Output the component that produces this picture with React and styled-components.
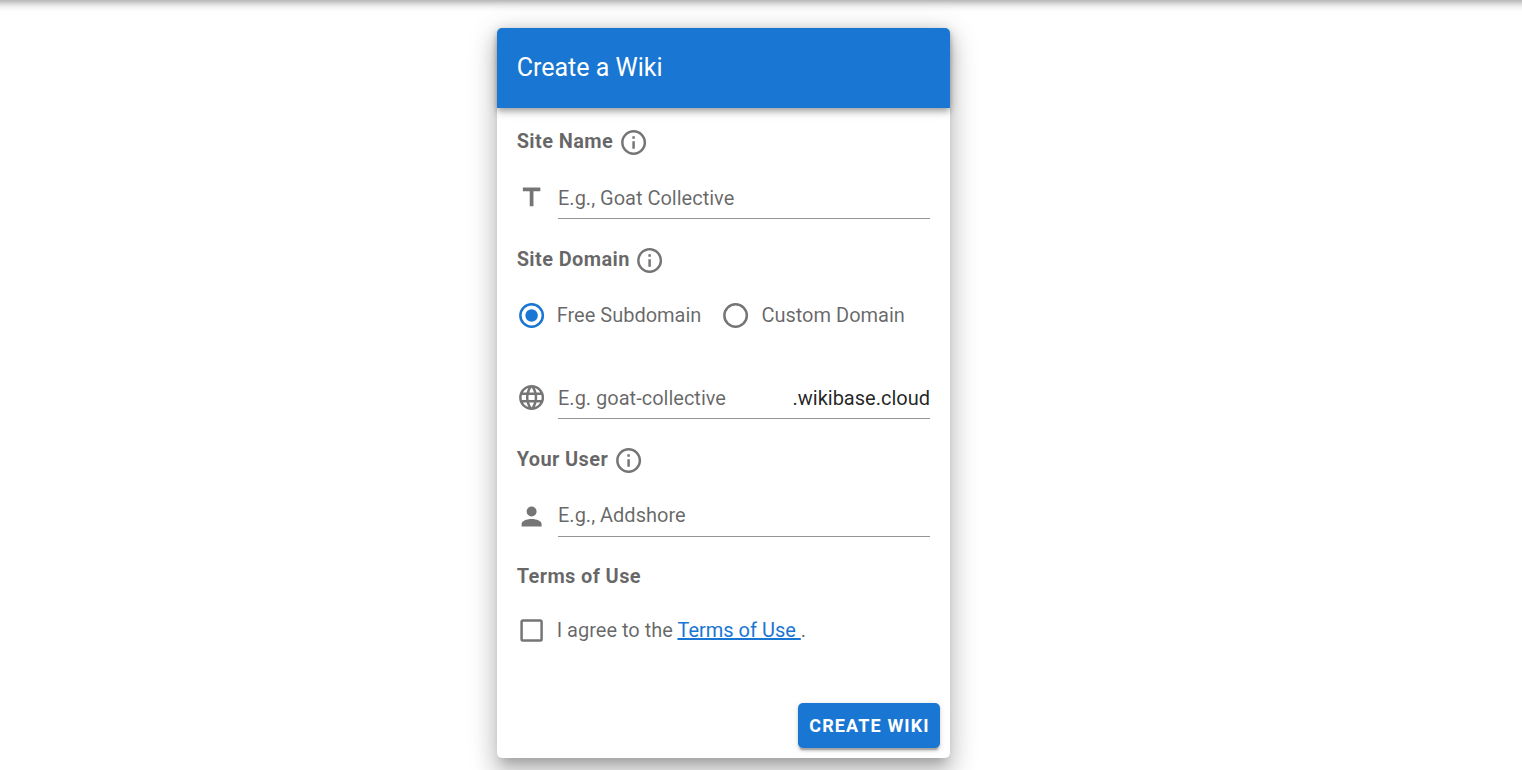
import React from "react";
import styled, { createGlobalStyle } from "styled-components";

const GlobalStyle = createGlobalStyle`
  *, *::before, *::after { box-sizing: border-box; }
  html, body { margin: 0; height: 100%; overflow: hidden; background: #fff; }
  body { font-family: Roboto, "Liberation Sans", sans-serif; font-size: 20px; color: rgba(0, 0, 0, 0.87); }
`;

const Page = styled.main`
  height: 770px;
  overflow: hidden;
  display: flex;
  flex-direction: column;
`;

const AppBarEdge = styled.div`
  flex: none;
  height: 80px;
  margin: -80px -20px 0;
  box-shadow: 0 2.5px 5px -1.25px rgba(0, 0, 0, 0.2), 0 5px 6.25px 0 rgba(0, 0, 0, 0.14),
    0 1.25px 12.5px 0 rgba(0, 0, 0, 0.12);
`;

const Card = styled.form`
  flex: none;
  width: 453px;
  height: 730px;
  margin: 28px 0 0 497px;
  display: flex;
  flex-direction: column;
  border-radius: 5px;
  background: #fff;
  box-shadow: 0 8.75px 10px -5px rgba(0, 0, 0, 0.2), 0 15px 21.25px 2.5px rgba(0, 0, 0, 0.14),
    0 6.25px 27.5px 5px rgba(0, 0, 0, 0.12);
`;

const Toolbar = styled.header`
  height: 80px;
  padding: 0 20px 0 19.7px;
  display: flex;
  align-items: center;
  border-radius: 5px 5px 0 0;
  background: #1976d2;
  color: #fff;
  font-size: 25px;
  line-height: 37.5px;
  box-shadow: 0 2.5px 5px -1.25px rgba(0, 0, 0, 0.2), 0 5px 6.25px 0 rgba(0, 0, 0, 0.14),
    0 1.25px 12.5px 0 rgba(0, 0, 0, 0.12);
`;

const Body = styled.div`
  flex: 1;
  padding: 19px 20px 0 19.7px;
  display: flex;
  flex-direction: column;
`;

const Heading = styled.h3`
  height: 30px;
  margin: ${(p) => p.$top || 0}px 0 0;
  display: flex;
  gap: 5.6px;
  color: rgba(0, 0, 0, 0.6);
  font-size: 20px;
  font-weight: 700;
  line-height: 29px;
  letter-spacing: 0.37px;
`;

const Svg = styled.svg`
  flex: none;
  width: 30px;
  height: 30px;
  margin-top: ${(p) => p.$shift || 0}px;
  transform: translate(-0.4px, -0.5px);
  fill: ${(p) => (p.$active ? "#1976d2" : "rgba(0, 0, 0, 0.54)")};
`;

const Field = styled.label`
  height: 40px;
  margin-top: ${(p) => p.$top}px;
  display: flex;
  gap: 11.3px;
`;

const InputLine = styled.span`
  flex: 1;
  min-width: 0;
  display: flex;
  align-items: center;
  padding-bottom: ${(p) => p.$lift || 2}px;
  border-bottom: 1px solid rgba(0, 0, 0, 0.42);
`;

const Input = styled.input`
  flex: 1;
  min-width: 0;
  height: 34px;
  padding: 0;
  border: 0;
  outline: 0;
  background: none;
  font: inherit;
  color: inherit;
  &::placeholder { color: rgba(0, 0, 0, 0.6); opacity: 1; }
`;

const Choices = styled.div`
  height: 30px;
  margin-top: ${(p) => p.$top}px;
  display: flex;
  gap: 20px;
`;

const Choice = styled.label`
  display: flex;
  gap: 10px;
  color: rgba(0, 0, 0, 0.6);
  line-height: 29px;
  white-space: pre;
`;

const Link = styled.a`
  color: #1976d2;
  text-decoration: underline;
`;

const Actions = styled.footer`
  padding: 10px;
  display: flex;
  justify-content: flex-end;
`;

const Button = styled.button`
  width: 142px;
  height: 45px;
  padding: 0 0 0 1px;
  border: 0;
  border-radius: 5px;
  background: #1976d2;
  color: #fff;
  font-family: inherit;
  font-size: 18px;
  font-weight: 700;
  letter-spacing: 1.15px;
  white-space: nowrap;
  box-shadow: 0 3.75px 1.25px -2.5px rgba(0, 0, 0, 0.2), 0 2.5px 2.5px 0 rgba(0, 0, 0, 0.14),
    0 1.25px 6.25px 0 rgba(0, 0, 0, 0.12);
`;

const icons = {
  info: "M11,9H13V7H11M12,20C7.59,20 4,16.41 4,12C4,7.59 7.59,4 12,4C16.41,4 20,7.59 20,12C20,16.41 16.41,20 12,20M12,2A10,10 0 0,0 2,12A10,10 0 0,0 12,22A10,10 0 0,0 22,12A10,10 0 0,0 12,2M11,17H13V11H11V17Z",
  title: "M5,4V7H10.5V19H13.5V7H19V4H5Z",
  radioOn: "M12,20A8,8 0 0,1 4,12A8,8 0 0,1 12,4A8,8 0 0,1 20,12A8,8 0 0,1 12,20M12,2A10,10 0 0,0 2,12A10,10 0 0,0 12,22A10,10 0 0,0 22,12A10,10 0 0,0 12,2M12,7A5,5 0 0,0 7,12A5,5 0 0,0 12,17A5,5 0 0,0 17,12A5,5 0 0,0 12,7Z",
  radioOff: "M12,20A8,8 0 0,1 4,12A8,8 0 0,1 12,4A8,8 0 0,1 20,12A8,8 0 0,1 12,20M12,2A10,10 0 0,0 2,12A10,10 0 0,0 12,22A10,10 0 0,0 22,12A10,10 0 0,0 12,2Z",
  web: "M16.36,14C16.44,13.34 16.5,12.68 16.5,12C16.5,11.32 16.44,10.66 16.36,10H19.74C19.9,10.64 20,11.31 20,12C20,12.69 19.9,13.36 19.74,14M14.59,19.56C15.19,18.45 15.65,17.25 15.97,16H18.92C17.96,17.65 16.43,18.93 14.59,19.56M14.34,14H9.66C9.56,13.34 9.5,12.68 9.5,12C9.5,11.32 9.56,10.65 9.66,10H14.34C14.43,10.65 14.5,11.32 14.5,12C14.5,12.68 14.43,13.34 14.34,14M12,19.96C11.17,18.76 10.5,17.43 10.09,16H13.91C13.5,17.43 12.83,18.76 12,19.96M8,8H5.08C6.03,6.34 7.57,5.06 9.4,4.44C8.8,5.55 8.35,6.75 8,8M5.08,16H8C8.35,17.25 8.8,18.45 9.4,19.56C7.57,18.93 6.03,17.65 5.08,16M4.26,14C4.1,13.36 4,12.69 4,12C4,11.31 4.1,10.64 4.26,10H7.64C7.56,10.66 7.5,11.32 7.5,12C7.5,12.68 7.56,13.34 7.64,14M12,4.03C12.83,5.23 13.5,6.57 13.91,8H10.09C10.5,6.57 11.17,5.23 12,4.03M18.92,8H15.97C15.65,6.75 15.19,5.55 14.59,4.44C16.43,5.07 17.96,6.34 18.92,8M12,2C6.47,2 2,6.5 2,12A10,10 0 0,0 12,22A10,10 0 0,0 22,12A10,10 0 0,0 12,2Z",
  account: "M12,4A4,4 0 0,1 16,8A4,4 0 0,1 12,12A4,4 0 0,1 8,8A4,4 0 0,1 12,4M12,14C16.42,14 20,15.79 20,18V20H4V18C4,15.79 7.58,14 12,14Z",
  box: "M19,3H5C3.89,3 3,3.89 3,5V19A2,2 0 0,0 5,21H19A2,2 0 0,0 21,19V5C21,3.89 20.1,3 19,3M19,5V19H5V5H19Z",
};

const Icon = ({ name, shift, active }) => (
  <Svg viewBox="0 0 24 24" $shift={shift} $active={active} aria-hidden="true">
    <path d={icons[name]} />
  </Svg>
);

export default function App() {
  return (
    <>
      <GlobalStyle />
      <Page>
        <AppBarEdge />
        <Card>
          <Toolbar>Create a Wiki</Toolbar>
          <Body>
            <Heading>Site Name<Icon name="info" shift={1} /></Heading>
            <Field $top={22}>
              <Icon name="title" shift={4} />
              <InputLine><Input placeholder="E.g., Goat Collective" /></InputLine>
            </Field>

            <Heading $top={26}>Site Domain<Icon name="info" shift={1} /></Heading>
            <Choices $top={26}>
              <Choice><Icon name="radioOn" active />Free Subdomain</Choice>
              <Choice><Icon name="radioOff" />Custom Domain</Choice>
            </Choices>
            <Field $top={48}>
              <Icon name="web" shift={4} />
              <InputLine><Input placeholder="E.g. goat-collective" />.wikibase.cloud</InputLine>
            </Field>

            <Heading $top={26}>Your User<Icon name="info" shift={1} /></Heading>
            <Field $top={22}>
              <Icon name="account" shift={4.5} />
              <InputLine $lift={4}><Input placeholder="E.g., Addshore" /></InputLine>
            </Field>

            <Heading $top={25}>Terms of Use</Heading>
            <Choices $top={24}>
              <Choice>
                <Icon name="box" />
                <span>I agree to the <Link>Terms of Use </Link>.</span>
              </Choice>
            </Choices>
          </Body>
          <Actions><Button type="button">CREATE WIKI</Button></Actions>
        </Card>
      </Page>
    </>
  );
}
